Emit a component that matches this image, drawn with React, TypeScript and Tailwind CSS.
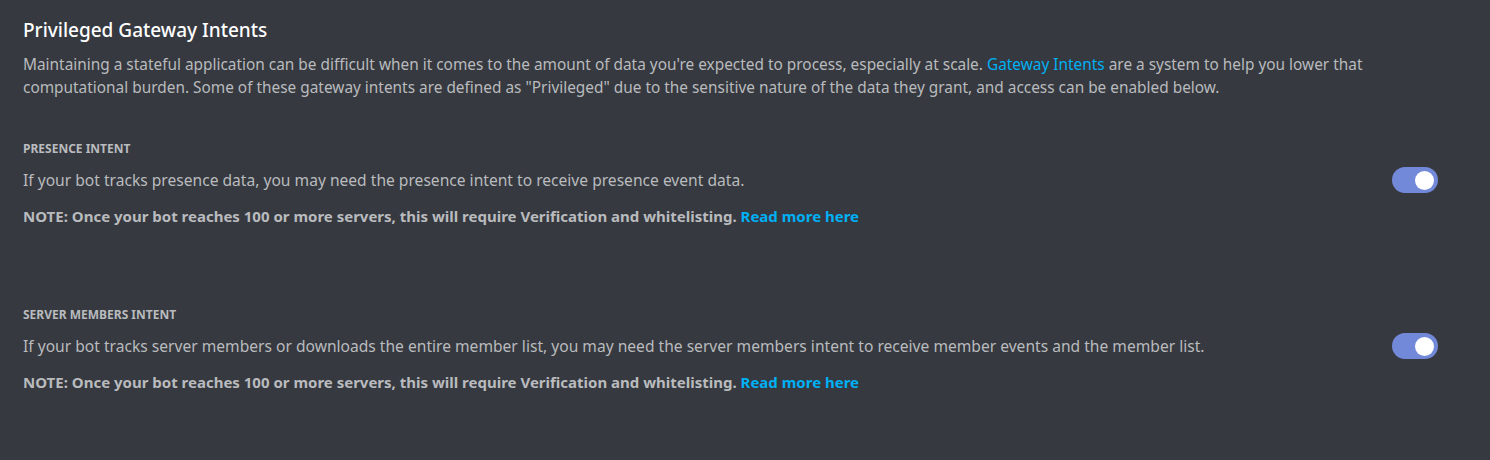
import React from "react";

const intents = [
  {
    id: "presence",
    title: "Presence Intent",
    body: "If your bot tracks presence data, you may need the presence intent to receive presence event data.",
  },
  {
    id: "members",
    title: "Server Members Intent",
    body: "If your bot tracks server members or downloads the entire member list, you may need the server members intent to receive member events and the member list.",
  },
];

function Toggle({ on }: { on: boolean }) {
  return (
    <div
      className={`flex h-[26px] w-[46px] shrink-0 items-center rounded-full px-[4px] ${
        on ? "justify-end bg-[#7289da]" : "justify-start bg-[#72767d]"
      }`}
    >
      <div className="h-[19px] w-[19px] rounded-full bg-white" />
    </div>
  );
}

export default function App() {
  return (
    <div className="min-h-[460px] w-full bg-[#36393f] pl-[23px] pr-[52px] pt-[17px] font-['Noto_Sans',sans-serif]">
      <h2 className="text-[19px] leading-[26px] font-medium text-white">Privileged Gateway Intents</h2>
      <p className="mt-[10px] text-[15.4px] leading-[23px] text-[#b9bbbe]">
        Maintaining a stateful application can be difficult when it comes to the amount of data you're expected to
        process, especially at scale. <span className="text-[#00b0f4]">Gateway Intents</span> are a system to help you
        lower that computational burden. Some of these gateway intents are defined as "Privileged" due to the sensitive
        nature of the data they grant, and access can be enabled below.
      </p>

      <div className="mt-[42px] flex flex-col gap-[81px]">
        {intents.map((it) => (
          <div key={it.id} className="flex flex-col">
            <div className="text-[12px] leading-[16px] font-bold uppercase text-[#b9bbbe]">{it.title}</div>
            <div className="mt-[10px] flex items-center justify-between">
              <div className="text-[15.6px] leading-[24px] text-[#b9bbbe]">{it.body}</div>
              <Toggle on />
            </div>
            <div className="mt-[13px] text-[15px] leading-[20px] font-bold text-[#b9bbbe]">
              NOTE: Once your bot reaches 100 or more servers, this will require Verification and whitelisting.{" "}
              <span className="text-[#00b0f4]">Read more here</span>
            </div>
          </div>
        ))}
      </div>
    </div>
  );
}
